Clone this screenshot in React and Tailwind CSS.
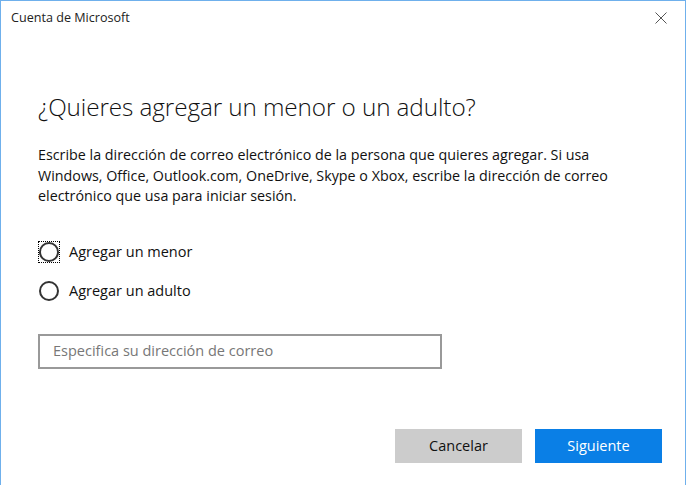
import React from "react";

export default function App() {
  const font = { fontFamily: '"Open Sans", "Noto Sans", sans-serif' };
  return (
    <div className="w-[687px] h-[485px] bg-white overflow-hidden" style={font}>
      <div className="w-[686px] h-[485px] border-l border-t border-r border-[#6fb0ec] flex flex-col">
        <div className="h-[34px] flex items-center justify-between pl-[10px] pr-[18px]">
          <span className="text-[12.6px] text-[#222]">Cuenta de Microsoft</span>
          <svg width="12" height="12" viewBox="0 0 12 12" className="mt-[-1px]">
            <path d="M0.5 0.5 L11.5 11.5 M11.5 0.5 L0.5 11.5" stroke="#555" strokeWidth="1" />
          </svg>
        </div>
        <div className="pl-[37px] pr-[24px] flex flex-col">
          <h1 className="mt-[56px] text-[24.3px] font-light text-[#111] leading-[32px] tracking-[-0.1px]">
            ¿Quieres agregar un menor o un adulto?
          </h1>
          <p className="mt-[22px] text-[14.3px] text-[#111] leading-[20.5px]">
            Escribe la dirección de correo electrónico de la persona que quieres agregar. Si usa
            <br />
            Windows, Office, Outlook.com, OneDrive, Skype o Xbox, escribe la dirección de correo
            <br />
            electrónico que usa para iniciar sesión.
          </p>
          <div className="mt-[35px] flex flex-col gap-[19px]">
            <label className="flex items-center h-[20px]">
              <span className="w-[22px] h-[22px] border border-dotted border-black flex items-center justify-center">
                <span className="w-[20px] h-[20px] rounded-full border-2 border-[#333]" />
              </span>
              <span className="ml-[9px] text-[14.5px] text-[#111]">Agregar un menor</span>
            </label>
            <label className="flex items-center h-[20px]">
              <span className="w-[22px] h-[22px] flex items-center justify-center">
                <span className="w-[20px] h-[20px] rounded-full border-2 border-[#333]" />
              </span>
              <span className="ml-[9px] text-[14.5px] text-[#111]">Agregar un adulto</span>
            </label>
          </div>
          <div className="mt-[33px] w-[404px] h-[35px] border-2 border-[#999] flex items-center px-[13px]">
            <span className="text-[14.5px] text-[#777]">Especifica su dirección de correo</span>
          </div>
        </div>
        <div className="mt-auto mb-[22px] flex justify-end gap-[13px] pr-[23px]">
          <button className="w-[127px] h-[34px] bg-[#cccccc] text-[14.5px] text-[#111]">Cancelar</button>
          <button className="w-[127px] h-[34px] bg-[#0a7fe6] text-[14.5px] text-white">Siguiente</button>
        </div>
      </div>
    </div>
  );
}
